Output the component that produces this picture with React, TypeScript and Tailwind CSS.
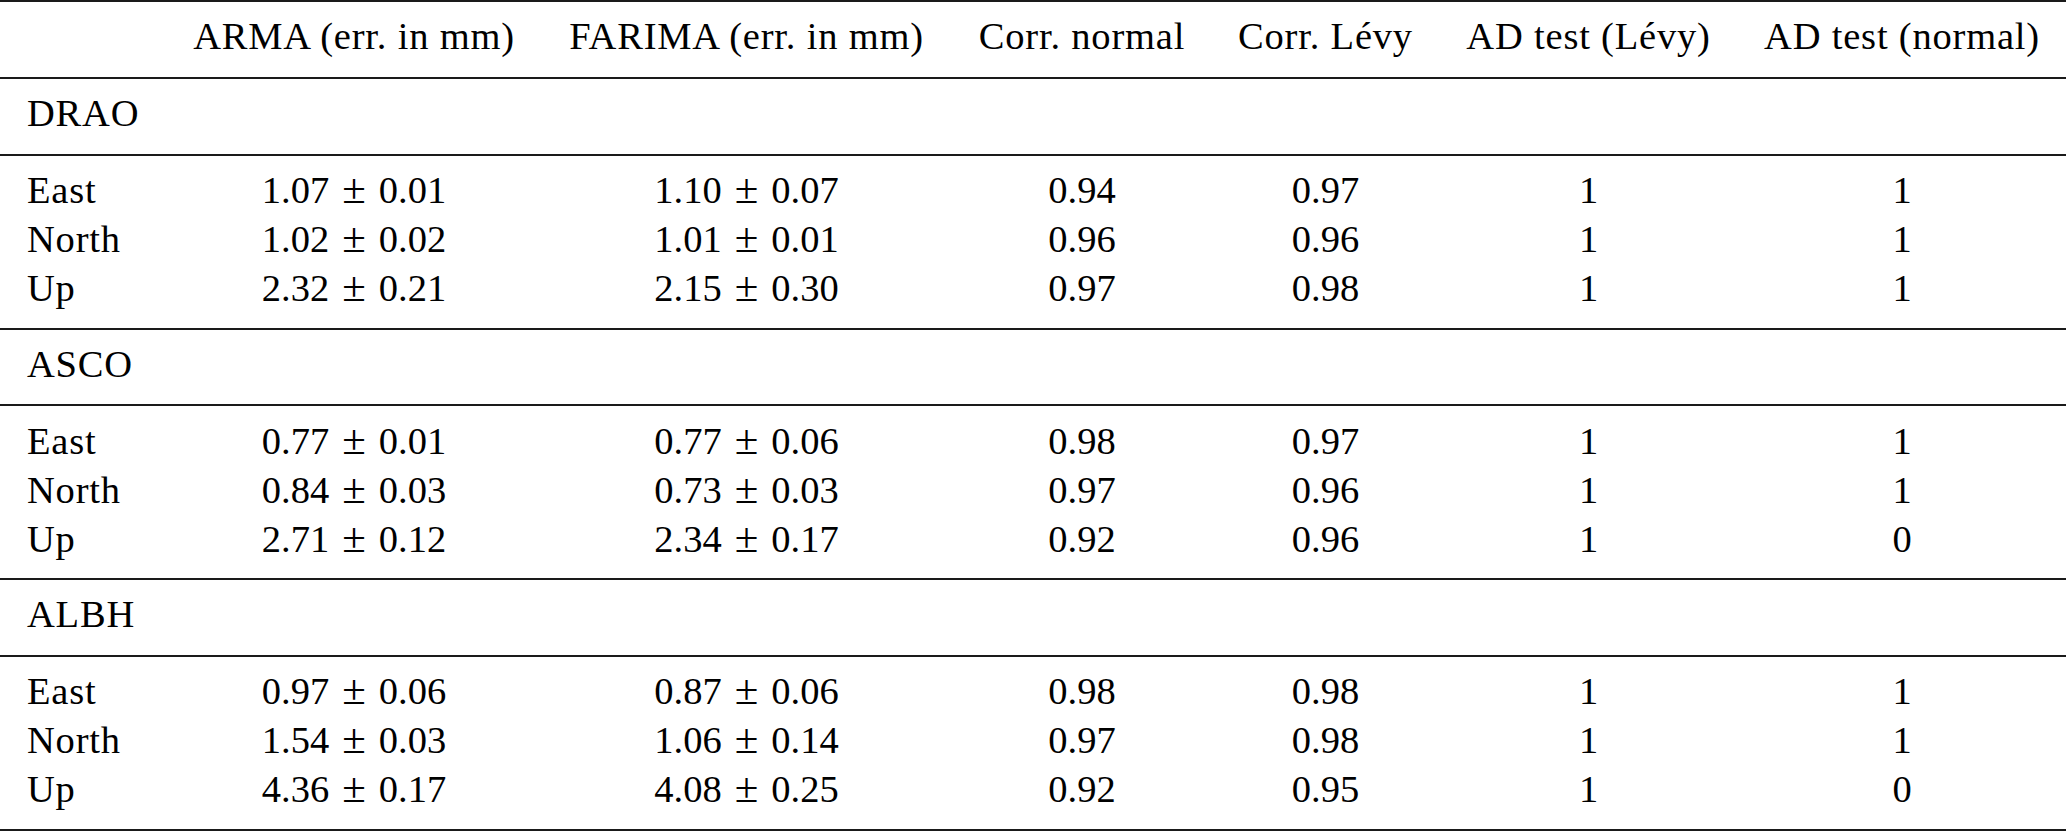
import React from "react";

const cols = "grid grid-cols-[167px_374px_411px_260px_227px_299px_328px]";

type Row = [string, string, string, string, string, string, string];

const groups: { name: string; rows: Row[] }[] = [
  {
    name: "DRAO",
    rows: [
      ["East", "1.07|0.01", "1.10|0.07", "0.94", "0.97", "1", "1"],
      ["North", "1.02|0.02", "1.01|0.01", "0.96", "0.96", "1", "1"],
      ["Up", "2.32|0.21", "2.15|0.30", "0.97", "0.98", "1", "1"],
    ],
  },
  {
    name: "ASCO",
    rows: [
      ["East", "0.77|0.01", "0.77|0.06", "0.98", "0.97", "1", "1"],
      ["North", "0.84|0.03", "0.73|0.03", "0.97", "0.96", "1", "1"],
      ["Up", "2.71|0.12", "2.34|0.17", "0.92", "0.96", "1", "0"],
    ],
  },
  {
    name: "ALBH",
    rows: [
      ["East", "0.97|0.06", "0.87|0.06", "0.98", "0.98", "1", "1"],
      ["North", "1.54|0.03", "1.06|0.14", "0.97", "0.98", "1", "1"],
      ["Up", "4.36|0.17", "4.08|0.25", "0.92", "0.95", "1", "0"],
    ],
  },
];

function PM({ v }: { v: string }) {
  const [a, b] = v.split("|");
  return (
    <span>
      {a}
      <span className="mx-[13px] text-[43px] leading-[0]">±</span>
      {b}
    </span>
  );
}

const head = "text-center tracking-[0.8px]";

export default function App() {
  return (
    <div className="bg-white w-[2067px] h-[832px] font-['Liberation_Serif',serif] text-black text-[38.5px] leading-[49px]">
      <div className="w-[2066px]">
        <div className={`${cols} border-t-2 border-[#1a1a1a] pt-[10px] pb-[16px]`}>
          <div />
          <div className={head}>ARMA (err. in mm)</div>
          <div className={head}>FARIMA (err. in mm)</div>
          <div className={head}>Corr. normal</div>
          <div className={head}>Corr. Lévy</div>
          <div className={head}>AD test (Lévy)</div>
          <div className={head}>AD test (normal)</div>
        </div>
        {groups.map((g) => (
          <div key={g.name}>
            <div className="border-t-2 border-[#1a1a1a] pt-[10px] pb-[15.5px] pl-[27px] tracking-[0.8px]">
              {g.name}
            </div>
            <div className="border-t-2 border-[#1a1a1a] pt-[10.5px] pb-[14.5px]">
              {g.rows.map((r, i) => (
                <div key={i} className={cols}>
                  <div className="pl-[27px] tracking-[0.8px]">{r[0]}</div>
                  <div className="text-center">
                    <PM v={r[1]} />
                  </div>
                  <div className="text-center">
                    <PM v={r[2]} />
                  </div>
                  <div className="text-center">{r[3]}</div>
                  <div className="text-center">{r[4]}</div>
                  <div className="text-center">{r[5]}</div>
                  <div className="text-center">{r[6]}</div>
                </div>
              ))}
            </div>
          </div>
        ))}
        <div className="border-t-2 border-[#1a1a1a]" />
      </div>
    </div>
  );
}
